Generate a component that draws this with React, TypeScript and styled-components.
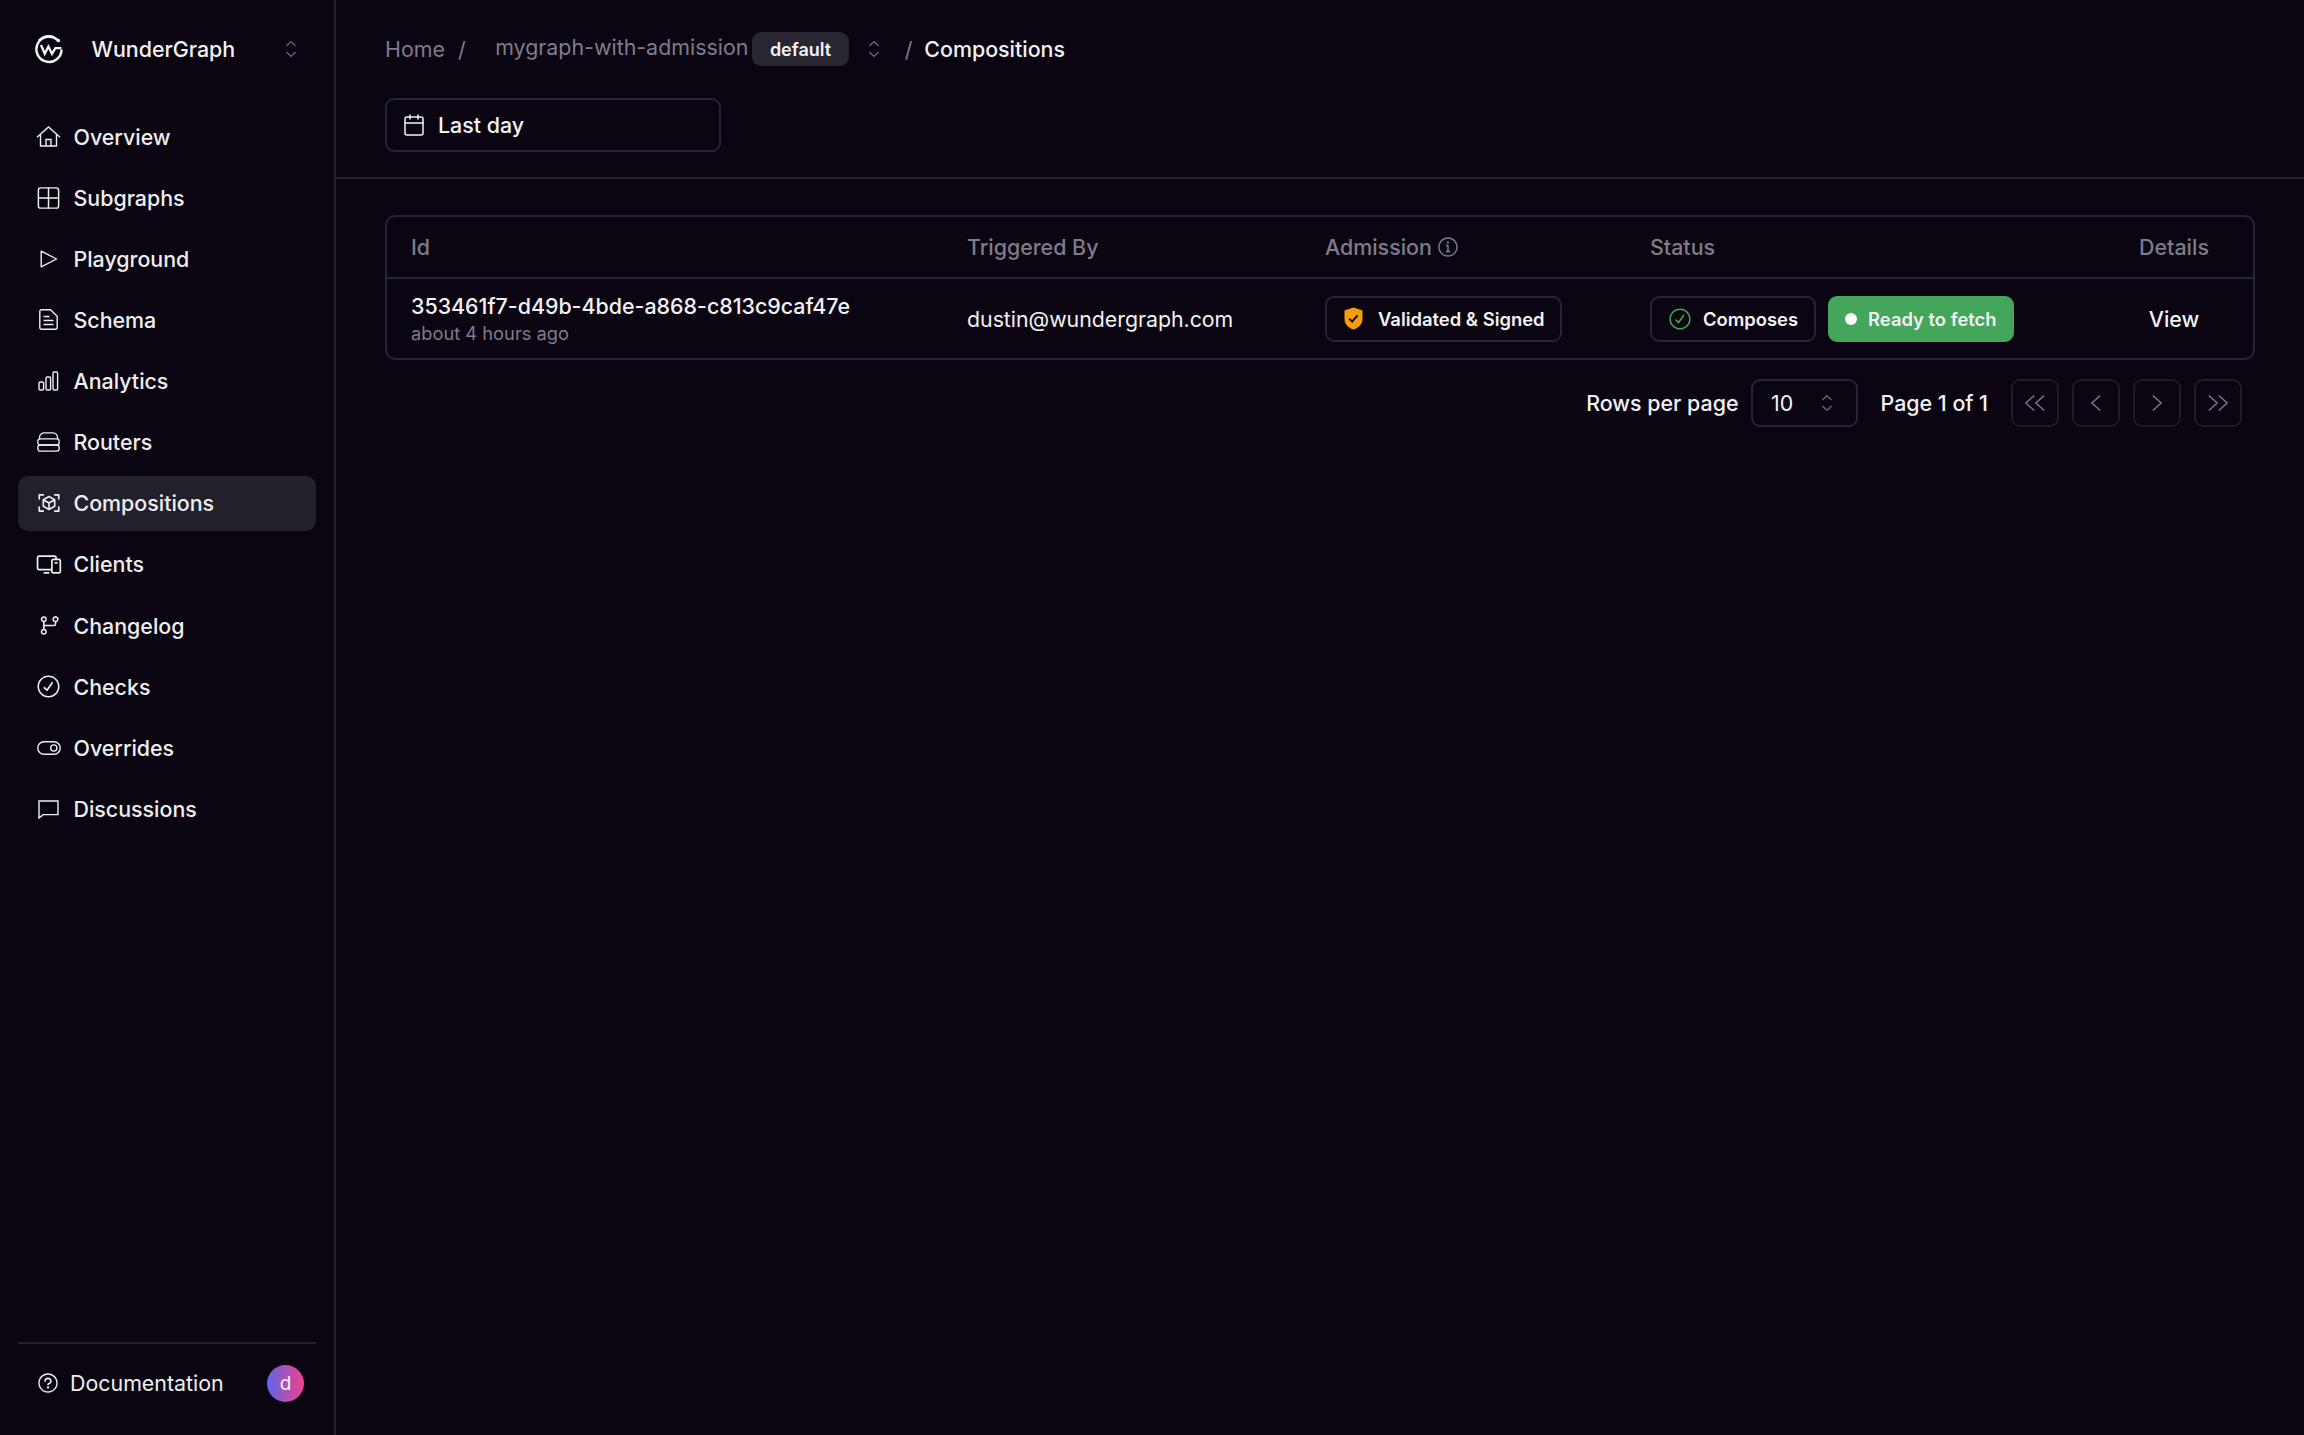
import { ReactNode } from 'react';
import styled, { createGlobalStyle } from 'styled-components';
import { RxCheckCircled, RxInfoCircled, RxQuestionMarkCircled } from 'react-icons/rx';
import { PiCubeFocus, PiDevices, PiGitBranch } from 'react-icons/pi';
import { Calendar, Grid2x2 } from 'lucide-react';

const GlobalStyle = createGlobalStyle`
  html, body {
    margin: 0;
    padding: 0;
    height: 100%;
    background: #0a0510;
  }
  #root {
    height: 100%;
  }
  * {
    box-sizing: border-box;
  }
`;

const Logo = () => (
  <svg width="30" height="30" viewBox="0 0 30 30" fill="none" stroke="#f4f4f6" strokeWidth="2.4">
    <path d="M24 6.5A12.6 12.6 0 1 0 27.6 15.5" />
    <path d="M5 6.6A12.6 12.6 0 0 1 20 3.4" />
    <circle cx="24.3" cy="6.6" r="1.8" fill="#f4f4f6" stroke="none" />
    <path d="M7 11l3.8 8.8 3.6-7.2 3.6 7.2 3.4-5.6h6" strokeWidth="2.3" />
  </svg>
);

const Chevrons = () => (
  <svg width="14" height="20" viewBox="0 0 14 20" fill="none" stroke="#6f6c7a" strokeWidth="1.2">
    <path d="M2.5 7L7 2.5 11.5 7M2.5 13L7 17.5 11.5 13" />
  </svg>
);

const HomeIcon = () => (
  <svg width="25" height="21" viewBox="0 0 25 21" fill="none" stroke="currentColor" strokeWidth="1.4">
    <path d="M1 11.2L12.5 1 24 11.2M4.5 8.5V20h16V8.5M10 20v-6.5h5V20" />
  </svg>
);

const PlayIcon = () => (
  <svg width="18" height="18" viewBox="0 0 18 18" fill="none" stroke="currentColor" strokeWidth="1.4" strokeLinejoin="round">
    <path d="M1.2 1.2L16.6 9 1.2 16.8z" />
  </svg>
);

const SchemaIcon = () => (
  <svg width="19" height="21" viewBox="0 0 19 21" fill="none" stroke="currentColor" strokeWidth="1.4">
    <path d="M2.5.8h9l6.7 6.5v10.9a2 2 0 0 1-2 2H2.5a1.7 1.7 0 0 1-1.7-1.7V2.5A1.7 1.7 0 0 1 2.5.8z" />
    <path d="M4.5 7.5h6M4.5 11.5h10M4.5 15.5h10" />
  </svg>
);

const AnalyticsIcon = () => (
  <svg width="21" height="20" viewBox="0 0 21 20" fill="none" stroke="currentColor" strokeWidth="1.4">
    <rect x="1" y="11" width="4.6" height="8" rx="1.2" />
    <rect x="8" y="6" width="4.6" height="13" rx="1.2" />
    <rect x="15" y="1" width="4.6" height="18" rx="1.2" />
  </svg>
);

const RouterIcon = () => (
  <svg width="23" height="20" viewBox="0 0 23 20" fill="none" stroke="currentColor" strokeWidth="1.3">
    <path d="M2.5 7V5.5C2.5 2.6 5 .8 7.5.8h8c2.5 0 5 1.8 5 4.7V7" />
    <rect x=".8" y="6.8" width="21.4" height="6.2" rx="2.6" />
    <rect x=".8" y="13" width="21.4" height="6.2" rx="2.6" />
    <path d="M15.5 9.9h.1M18.5 9.9h.1M15.5 16.1h.1M18.5 16.1h.1" strokeWidth="1.5" />
  </svg>
);

const ToggleIcon = () => (
  <svg width="24" height="14" viewBox="0 0 24 14" fill="none" stroke="currentColor" strokeWidth="1.4">
    <rect x=".8" y=".8" width="22.4" height="12.4" rx="6.2" />
    <circle cx="16.8" cy="7" r="3.1" />
  </svg>
);

const BubbleIcon = () => (
  <svg width="21" height="19" viewBox="0 0 21 19" fill="none" stroke="currentColor" strokeWidth="1.4">
    <path d="M1 1h19v13.6H5.2L1 18z" />
  </svg>
);

const ShieldIcon = () => (
  <svg width="19" height="23" viewBox="0 0 19 23" fill="none">
    <path d="M9.5.4l9 3.1V12c0 5.4-4.4 9-9 10.6C4.9 21 .5 17.4.5 12V3.5z" fill="#f59e0b" />
    <path d="M5.2 11.6l3 3 5.4-6.2" stroke="#0a0510" strokeWidth="2" />
  </svg>
);

// the pager arrows, dir -1 points left, count is one or two chevrons
const PagerIcon = ({ dir, count }: { dir: 1 | -1; count: 1 | 2 }) => {
  const tips = count === 2 ? [5, 15] : [10];
  return (
    <svg width="22" height="18" viewBox="0 0 22 18" fill="none" stroke="#7d7a88" strokeWidth="1.4">
      {tips.map((x) => (
        <path key={x} d={`M${x + 1 - 4.2 * dir} 1.5L${x + 1 + 4.2 * dir} 9 ${x + 1 - 4.2 * dir} 16.5`} />
      ))}
    </svg>
  );
};

const navItems: { label: string; icon: ReactNode }[] = [
  { label: 'Overview', icon: <HomeIcon /> },
  { label: 'Subgraphs', icon: <Grid2x2 size={28} strokeWidth={1.3} /> },
  { label: 'Playground', icon: <PlayIcon /> },
  { label: 'Schema', icon: <SchemaIcon /> },
  { label: 'Analytics', icon: <AnalyticsIcon /> },
  { label: 'Routers', icon: <RouterIcon /> },
  { label: 'Compositions', icon: <PiCubeFocus size={26} /> },
  { label: 'Clients', icon: <PiDevices size={27} /> },
  { label: 'Changelog', icon: <PiGitBranch size={25} /> },
  { label: 'Checks', icon: <RxCheckCircled size={25} /> },
  { label: 'Overrides', icon: <ToggleIcon /> },
  { label: 'Discussions', icon: <BubbleIcon /> },
];

export default function App() {
  return (
    <>
      <GlobalStyle />
      <Shell>
        <Sidebar>
          <Brand>
            <BrandMark>
              <Logo />
            </BrandMark>
            <BrandName>WunderGraph</BrandName>
            <Chevrons />
          </Brand>
          <Nav>
            {navItems.map((item) => (
              <NavItem key={item.label} $active={item.label === 'Compositions'}>
                <NavIcon>{item.icon}</NavIcon>
                {item.label}
              </NavItem>
            ))}
          </Nav>
          <SidebarFooter>
            <DocLink>
              <RxQuestionMarkCircled size={22} />
              Documentation
            </DocLink>
            <Avatar>d</Avatar>
          </SidebarFooter>
        </Sidebar>
        <Main>
          <TopBar>
            <Breadcrumb>
              <Crumb>Home</Crumb>
              <Slash>/</Slash>
              <GraphName>mygraph-with-admission</GraphName>
              <Namespace>default</Namespace>
              <CrumbChevrons>
                <Chevrons />
              </CrumbChevrons>
              <Slash $tight>/</Slash>
              <CurrentCrumb>Compositions</CurrentCrumb>
            </Breadcrumb>
            <DateButton>
              <Calendar size={24} strokeWidth={1.5} />
              Last day
            </DateButton>
          </TopBar>
          <Content>
            <Table>
              <HeadRow>
                <HeadCell>Id</HeadCell>
                <HeadCell>Triggered By</HeadCell>
                <HeadCell>
                  Admission
                  <RxInfoCircled size={22} />
                </HeadCell>
                <HeadCell>Status</HeadCell>
                <DetailsHead>Details</DetailsHead>
              </HeadRow>
              <BodyRow>
                <IdCell>
                  <IdText>353461f7-d49b-4bde-a868-c813c9caf47e</IdText>
                  <TimeText>about 4 hours ago</TimeText>
                </IdCell>
                <EmailCell>dustin@wundergraph.com</EmailCell>
                <Cell>
                  <ShieldBadge>
                    <ShieldIcon />
                    Validated &amp; Signed
                  </ShieldBadge>
                </Cell>
                <StatusCell>
                  <Badge>
                    <RxCheckCircled size={24} color="#3fa857" />
                    Composes
                  </Badge>
                  <ReadyBadge>
                    <Dot />
                    Ready to fetch
                  </ReadyBadge>
                </StatusCell>
                <ViewCell>View</ViewCell>
              </BodyRow>
            </Table>
            <Pagination>
              <PageLabel>Rows per page</PageLabel>
              <RowsSelect>
                10
                <Chevrons />
              </RowsSelect>
              <PageCount>Page 1 of 1</PageCount>
              <PageButtons>
                <PageButton><PagerIcon dir={-1} count={2} /></PageButton>
                <PageButton><PagerIcon dir={-1} count={1} /></PageButton>
                <PageButton><PagerIcon dir={1} count={1} /></PageButton>
                <PageButton><PagerIcon dir={1} count={2} /></PageButton>
              </PageButtons>
            </Pagination>
          </Content>
        </Main>
      </Shell>
    </>
  );
}

const Shell = styled.div`
  display: grid;
  grid-template-columns: 336px 1fr;
  height: 1435px;
  background: #0a0510;
  color: #f2f2f4;
  font-family: Inter, 'Liberation Sans', sans-serif;
  font-size: 21.4px;
`;

const Sidebar = styled.aside`
  display: flex;
  flex-direction: column;
  padding: 0 18px;
  border-right: 2px solid #24222c;
`;

const Brand = styled.div`
  display: flex;
  align-items: center;
  height: 98px;
  padding: 0 18px 0 16px;
`;

const BrandMark = styled.div`
  display: flex;
  width: 57.5px;
`;

const BrandName = styled.div`
  flex: 1;
  font-weight: 500;
`;

const Nav = styled.nav`
  display: flex;
  flex-direction: column;
  gap: 6.15px;
  margin-top: 11px;
`;

const NavItem = styled.a<{ $active?: boolean }>`
  display: flex;
  align-items: center;
  gap: 11.5px;
  height: 55px;
  padding-left: 17px;
  border-radius: 10px;
  font-weight: 500;
  color: #eeeef1;
  background: ${(p) => (p.$active ? '#21202b' : 'transparent')};
`;

const NavIcon = styled.span`
  display: flex;
  align-items: center;
  justify-content: center;
  width: 27px;
`;

const SidebarFooter = styled.div`
  display: flex;
  align-items: center;
  justify-content: space-between;
  margin-top: auto;
  height: 93px;
  padding: 0 12px 13px 19px;
  border-top: 2px solid #24222c;
`;

const DocLink = styled.a`
  display: flex;
  align-items: center;
  gap: 11px;
  color: #eeeef1;
`;

const Avatar = styled.div`
  display: flex;
  align-items: center;
  justify-content: center;
  width: 37px;
  height: 37px;
  border-radius: 50%;
  font-size: 19px;
  background: linear-gradient(90deg, #5f66e8, #f0408a);
`;

const Main = styled.main`
  display: flex;
  flex-direction: column;
`;

const TopBar = styled.header`
  display: flex;
  flex-direction: column;
  gap: 32px;
  height: 179px;
  padding: 32px 49px 0;
  border-bottom: 2px solid #24222c;
`;

const Breadcrumb = styled.div`
  display: flex;
  align-items: center;
  height: 34px;
`;

const Crumb = styled.span`
  color: #7f7c8c;
`;

const Slash = styled.span<{ $tight?: boolean }>`
  margin-left: ${(p) => (p.$tight ? '24px' : '13px')};
  margin-right: ${(p) => (p.$tight ? '12px' : '29.5px')};
  color: #7f7c8c;
`;

const GraphName = styled.span`
  color: #7f7c8c;
  margin-top: -4px;
`;

const Namespace = styled.span`
  display: flex;
  align-items: center;
  height: 34px;
  margin-left: 4px;
  padding: 0 17.5px;
  border-radius: 9px;
  background: #272631;
  font-size: 18px;
  font-weight: 600;
`;

const CrumbChevrons = styled.span`
  display: flex;
  margin-left: 18px;
`;

const CurrentCrumb = styled.span`
  font-weight: 500;
`;

const DateButton = styled.div`
  display: flex;
  align-items: center;
  gap: 12px;
  width: 336px;
  height: 54px;
  padding: 0 15px;
  border: 2px solid #272531;
  border-radius: 9px;
  font-weight: 500;
`;

const Content = styled.div`
  padding: 36px 49px 0 49px;
`;

const Table = styled.div`
  border: 2px solid #272531;
  border-radius: 10px;
`;

const HeadRow = styled.div`
  display: grid;
  grid-template-columns: 555px 358px 325px 490px 1fr;
  align-items: center;
  height: 62px;
  border-bottom: 2px solid #272531;
`;

const BodyRow = styled.div`
  display: grid;
  grid-template-columns: 555px 358px 325px 490px 1fr;
  align-items: center;
  height: 79px;
`;

const HeadCell = styled.div`
  display: flex;
  align-items: center;
  gap: 5px;
  padding-left: 25px;
  color: #7f7c8c;
  font-weight: 500;

  &:first-child {
    padding-left: 24px;
  }
`;

const DetailsHead = styled(HeadCell)`
  justify-content: center;
  padding: 0 20px 0 0;
`;

const Cell = styled.div`
  padding-left: 25px;
  font-weight: 500;
`;

const EmailCell = styled(Cell)`
  font-size: 21.3px;
  font-weight: 400;
`;

const IdCell = styled(Cell)`
  display: flex;
  flex-direction: column;
  gap: 2px;
  padding: 1px 0 0 24px;
`;

const IdText = styled.span`
  line-height: 26px;
`;

const TimeText = styled.span`
  font-size: 18.3px;
  line-height: 24px;
  font-weight: 400;
  color: #7f7c8c;
`;

const StatusCell = styled(Cell)`
  display: flex;
  gap: 12px;
`;

const ViewCell = styled(Cell)`
  padding: 0 20px 0 0;
  text-align: center;
`;

const Badge = styled.span`
  display: inline-flex;
  align-items: center;
  gap: 11px;
  height: 46px;
  padding: 0 16px;
  border: 2px solid #272531;
  border-radius: 9px;
  font-size: 18.4px;
  font-weight: 600;
`;

const ShieldBadge = styled(Badge)`
  gap: 15px;
  padding: 0 15px 0 17px;
`;

const ReadyBadge = styled(Badge)`
  padding: 0 15px;
  border-color: #43a65a;
  background: #43a65a;
`;

const Dot = styled.span`
  width: 12px;
  height: 12px;
  border-radius: 50%;
  background: #fff;
`;

const Pagination = styled.div`
  display: flex;
  align-items: center;
  justify-content: flex-end;
  margin-top: 19px;
  padding-right: 13px;
  font-weight: 500;
`;

const PageLabel = styled.span`
  margin-right: 12.5px;
`;

const RowsSelect = styled.div`
  display: flex;
  align-items: center;
  justify-content: space-between;
  width: 107px;
  height: 48px;
  padding: 0 22px 0 18px;
  border: 2px solid #272531;
  border-radius: 9px;
  font-weight: 400;
`;

const PageCount = styled.span`
  margin: 0 23px 0 22.5px;
`;

const PageButtons = styled.div`
  display: flex;
  gap: 13px;
`;

const PageButton = styled.button`
  display: flex;
  align-items: center;
  justify-content: center;
  width: 48px;
  height: 48px;
  padding: 0;
  background: transparent;
  border: 2px solid #1e1c26;
  border-radius: 9px;
`;
